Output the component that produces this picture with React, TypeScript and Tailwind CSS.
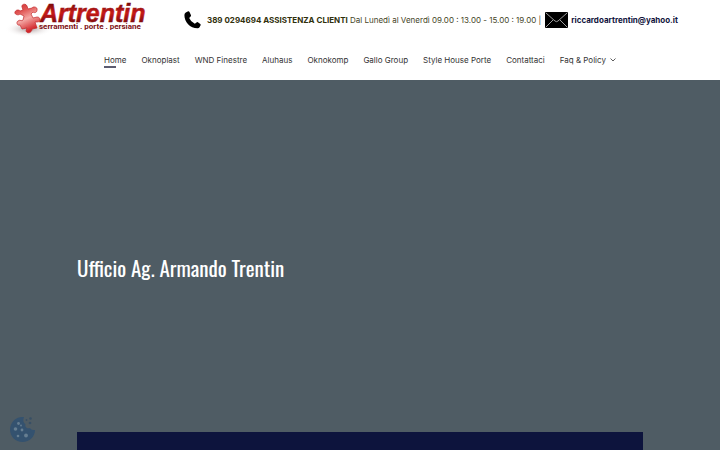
import React from 'react';

const links = [
  'Home',
  'Oknoplast',
  'WND Finestre',
  'Aluhaus',
  'Oknokomp',
  'Gallo Group',
  'Style House Porte',
  'Contattaci',
];

const Logo = () => (
  <a href="#" aria-label="Artrentin serramenti, porte, persiane" className="block w-40 shrink-0">
    <svg viewBox="0 0 160 40" className="block w-full h-10">
      <defs>
        <linearGradient id="word" x1="0" y1="0" x2="0" y2="1">
          <stop offset="0.1" stopColor="#6b0809" />
          <stop offset="0.5" stopColor="#c91a18" />
          <stop offset="0.85" stopColor="#7d0a0c" />
        </linearGradient>
        <linearGradient id="piece" x1="0" y1="0" x2="0.4" y2="1">
          <stop offset="0" stopColor="#cf3133" />
          <stop offset="0.3" stopColor="#e05553" />
          <stop offset="0.6" stopColor="#f4a8a4" />
          <stop offset="1" stopColor="#d2262a" />
        </linearGradient>
        <radialGradient id="shade">
          <stop offset="0" stopColor="#6d5555" stopOpacity="0.6" />
          <stop offset="1" stopColor="#ffffff" stopOpacity="0" />
        </radialGradient>
      </defs>
      <ellipse cx="29" cy="29" rx="24" ry="8" fill="url(#shade)" />
      <path
        d="M23 10L22 7C21 4 26 3 27 6L28 9L32 8C33 6 38 7 37 10C37 13 34 13 33 12L31 14L33 18L37 17C41 17 41 22 37 22L35 22L37 28L32 29C32 33 27 34 26 31L27 28L22 29L20 25C17 26 16 22 18 21C20 19 22 22 23 20L24 16L20 14C18 16 14 14 15 12C16 9 20 10 20 11Z"
        fill="url(#piece)"
        stroke="#c3282b"
        strokeWidth="0.7"
        strokeLinejoin="round"
      />
      <text
        x="40"
        y="22"
        fontFamily="Liberation Sans, sans-serif"
        fontStyle="italic"
        fontWeight="700"
        fontSize="25"
        fill="url(#word)"
        stroke="url(#word)"
        strokeWidth="0.5"
      >
        Artrentin
      </text>
      <text x="39" y="29" fontFamily="Roboto, sans-serif" fontWeight="700" fontSize="8" fill="#7d1014">
        serramenti . porte . persiane
      </text>
    </svg>
  </a>
);

const PhoneIcon = () => (
  <svg viewBox="0 0 18 18" className="size-[18px] shrink-0" fill="#000">
    <path d="M1.800 1.500L4.200 .3Q5 .1 5.500 .9L7 4.200Q7.200 5 6.600 5.600L5.200 7Q6.800 11 10.800 12.800L12.500 11.400Q13.100 10.900 13.900 11.300L16.300 12.900Q17 13.500 16.600 14.300L15.500 16.300Q14.900 17.400 13.500 17.300C6 17 .3 11 .4 3.900Q.5 2.200 1.800 1.500Z" />
  </svg>
);

const MailIcon = () => (
  <svg viewBox="0 0 23 16" className="w-[23px] h-4 shrink-0">
    <rect width="23" height="16" rx="1" fill="#000" />
    <path d="M1 1L10 9Q11.500 10.300 13 9L22 1M1 15L8 8M22 15L15 8" fill="none" stroke="#c8c8c8" strokeWidth="0.8" />
  </svg>
);

const CookieIcon = () => (
  <svg viewBox="0 0 26 26" className="block size-[26px]">
    <path d="M14 1C6 0 0 6.500 0 13.500S5.500 26 12.500 26S25 20.500 25 14C23 14 21 14 20 12C17 13 14.500 11 15.500 8C13 7 13 3.500 14 1Z" fill="#34526f" />
    <g fill="#667e91">
      <circle cx="8.500" cy="7.500" r="1.400" />
      <circle cx="5.500" cy="13" r="1.800" />
      <circle cx="12" cy="14" r="1.400" />
      <circle cx="8" cy="20" r="1.300" />
      <circle cx="16" cy="19.500" r="1.900" />
      <circle cx="11" cy="9.500" r="0.900" />
    </g>
    <g fill="#384f65">
      <circle cx="20.500" cy="2.500" r="1.300" />
      <circle cx="16.500" cy="4" r="0.900" />
      <circle cx="20" cy="7" r="1.300" />
    </g>
  </svg>
);

export default function App() {
  return (
    <div className="min-h-screen flex flex-col bg-[#4f5c64] font-['Inter',sans-serif]">
      <header className="bg-white">
        <div className="flex items-center h-10">
          <Logo />
          <div className="flex items-center ml-6 text-[8px] whitespace-nowrap text-[#45451f]">
            <PhoneIcon />
            <p className="ml-[5px]">
              <strong className="font-bold text-[#30300c]">389 0294694 ASSISTENZA CLIENTI</strong> Dal Lunedì al Venerdì 09.00 : 13.00 - 15.00 : 19.00 |
            </p>
            <span className="ml-1">
              <MailIcon />
            </span>
            <a href="mailto:riccardoartrentin@yahoo.it" className="ml-[3px] font-bold text-[#11143c]">
              riccardoartrentin@yahoo.it
            </a>
          </div>
        </div>
        <nav className="flex items-center justify-center gap-[15px] h-10 text-[8px] whitespace-nowrap text-[#333]">
          {links.map(link => (
            <a key={link} href="#" className="relative py-0.5">
              {link}
              {link === 'Home' && <span className="absolute left-0 bottom-0 w-3 h-0.5 bg-[#5c5c70]" />}
            </a>
          ))}
          <button type="button" className="flex items-center gap-1">
            Faq &amp; Policy
            <svg viewBox="0 0 6 4" className="w-1.5 h-1" fill="none" stroke="currentColor" strokeWidth="0.8">
              <path d="M0.500 0.500L3 3L5.500 0.500" />
            </svg>
          </button>
        </nav>
      </header>

      <main className="grow flex flex-col px-[77px]">
        <div className="grow flex items-center py-4">
          <h1 className="mt-6 text-[21px] text-white font-['Oswald','Liberation_Sans_Narrow',sans-serif]">
            Ufficio Ag. Armando Trentin
          </h1>
        </div>
        <div className="h-[18px] bg-[#0d143d]" />
      </main>

      <button type="button" aria-label="Cookie" className="fixed left-[10px] bottom-2">
        <CookieIcon />
      </button>
    </div>
  );
}
